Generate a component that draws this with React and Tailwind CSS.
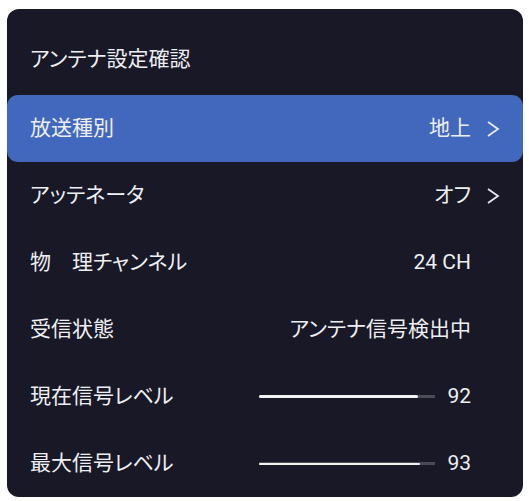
import React from 'react';

const rows = [
  { label: '放送種別', value: '地上', arrow: true, active: true },
  { label: 'アッテネータ', value: 'オフ', arrow: true },
  { label: '物　理チャンネル', value: '24 CH' },
  { label: '受信状態', value: 'アンテナ信号検出中' },
  { label: '現在信号レベル', value: '92', level: 92, thick: true },
  { label: '最大信号レベル', value: '93', level: 93 },
];

function Chevron({ show }) {
  return (
    <span className="ml-[15px] flex w-[14px] items-center justify-center">
      {show && (
        <svg width="14" height="18" viewBox="0 0 14 18" fill="none">
          <polyline points="2,2 12,9 2,16" stroke="#e6e8f0" strokeWidth="1.8" strokeLinejoin="miter" />
        </svg>
      )}
    </span>
  );
}

export default function App() {
  return (
    <div
      className="h-[501px] w-[529px] bg-white pl-[7px] pt-[9px]"
      style={{ fontFamily: 'Roboto, "Noto Sans CJK JP", sans-serif' }}
    >
      <div className="h-[488px] w-[516px] overflow-hidden rounded-[12px] bg-[#181826] text-[#eeeff3] [font-feature-settings:'palt']">
        {/* Title */}
        <div className="flex h-[86px] items-center pl-[23px] pt-[16px] text-[21px]">アンテナ設定確認</div>

        {/* Menu rows */}
        {rows.map((row, idx) => (
          <div
            key={idx}
            className={
              row.active
                ? 'flex h-[67px] items-center justify-between rounded-[11px] bg-[#4168bd] pl-[23px] pr-[23px] text-[21px]'
                : 'flex h-[67px] items-center justify-between pl-[23px] pr-[23px] text-[21px]'
            }
          >
            <span className="whitespace-pre">{row.label}</span>
            <div className="flex items-center">
              {row.level !== undefined && (
                <div className="mr-[12px] flex h-[3px] w-[176px] items-center bg-[#4a4b57]">
                  <div
                    className={row.thick ? 'h-[3px] rounded-full bg-[#f2f2f5]' : 'h-[2px] rounded-full bg-[#f2f2f5]'}
                    style={{ width: `${(row.level / 100) * 176 - 3}px` }}
                  />
                </div>
              )}
              <span>{row.value}</span>
              <Chevron show={row.arrow} />
            </div>
          </div>
        ))}
      </div>
    </div>
  );
}
